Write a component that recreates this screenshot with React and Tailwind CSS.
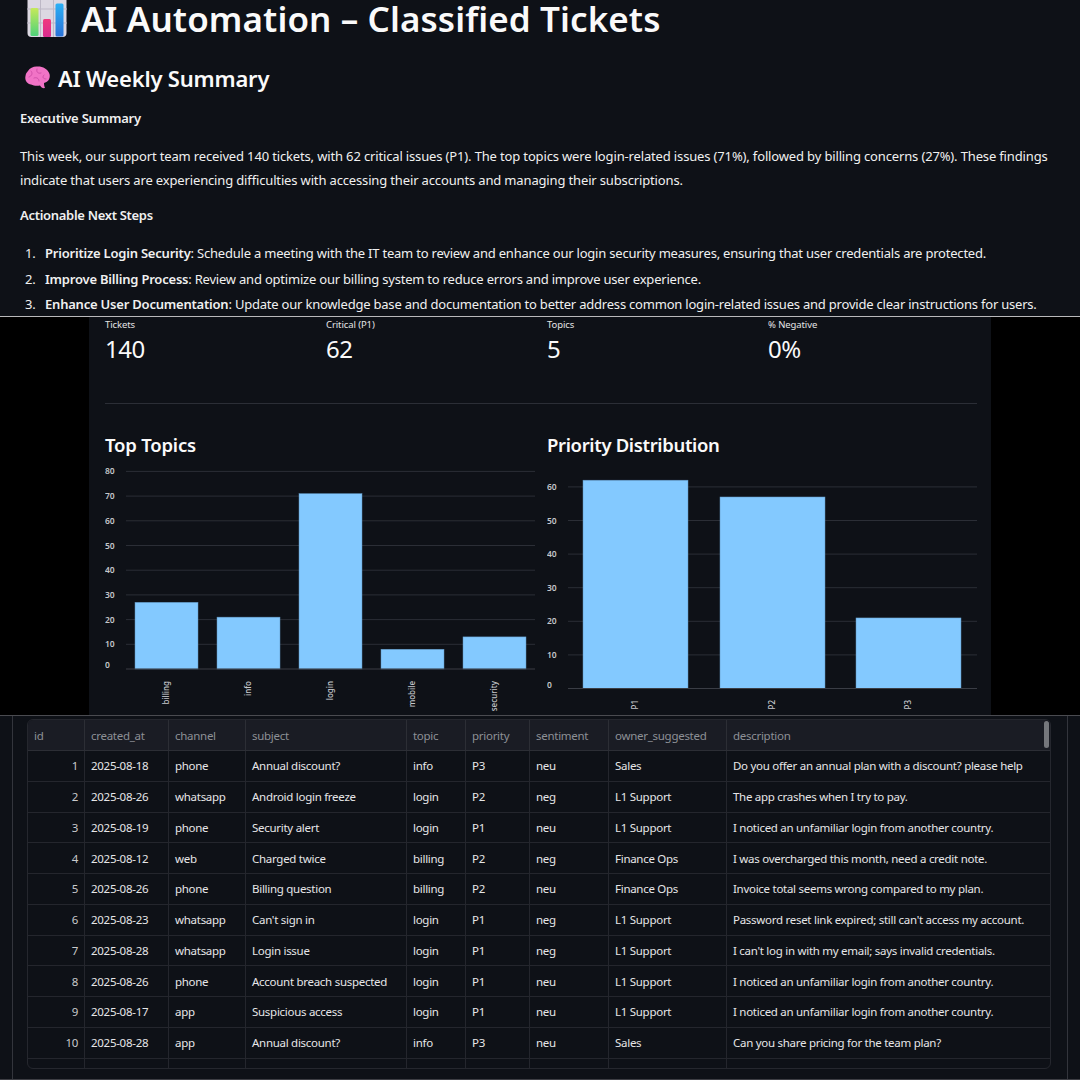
const rows = [
  [1, "2025-08-18", "phone", "Annual discount?", "info", "P3", "neu", "Sales", "Do you offer an annual plan with a discount? please help"],
  [2, "2025-08-26", "whatsapp", "Android login freeze", "login", "P2", "neg", "L1 Support", "The app crashes when I try to pay."],
  [3, "2025-08-19", "phone", "Security alert", "login", "P1", "neu", "L1 Support", "I noticed an unfamiliar login from another country."],
  [4, "2025-08-12", "web", "Charged twice", "billing", "P2", "neg", "Finance Ops", "I was overcharged this month, need a credit note."],
  [5, "2025-08-26", "phone", "Billing question", "billing", "P2", "neu", "Finance Ops", "Invoice total seems wrong compared to my plan."],
  [6, "2025-08-23", "whatsapp", "Can't sign in", "login", "P1", "neg", "L1 Support", "Password reset link expired; still can't access my account."],
  [7, "2025-08-28", "whatsapp", "Login issue", "login", "P1", "neg", "L1 Support", "I can't log in with my email; says invalid credentials."],
  [8, "2025-08-26", "phone", "Account breach suspected", "login", "P1", "neu", "L1 Support", "I noticed an unfamiliar login from another country."],
  [9, "2025-08-17", "app", "Suspicious access", "login", "P1", "neu", "L1 Support", "I noticed an unfamiliar login from another country."],
  [10, "2025-08-28", "app", "Annual discount?", "info", "P3", "neu", "Sales", "Can you share pricing for the team plan?"],
];

const columns = ["id", "created_at", "channel", "subject", "topic", "priority", "sentiment", "owner_suggested", "description"];
const gridCols = "grid grid-cols-[57px_84px_77px_161px_59px_64px_79px_118px_1fr]";

const metrics = [
  ["Tickets", "140"],
  ["Critical (P1)", "62"],
  ["Topics", "5"],
  ["% Negative", "0%"],
];

function ChartEmoji() {
  return (
    <svg width="40" height="38" viewBox="0 0 40 38" className="shrink-0">
      <defs>
        <linearGradient id="g1" x1="0" y1="0" x2="0" y2="1"><stop offset="0" stopColor="#c6e95a" /><stop offset="1" stopColor="#4fd27a" /></linearGradient>
        <linearGradient id="g2" x1="0" y1="0" x2="0" y2="1"><stop offset="0" stopColor="#f0397f" /><stop offset="1" stopColor="#d92c8e" /></linearGradient>
        <linearGradient id="g3" x1="0" y1="0" x2="0" y2="1"><stop offset="0" stopColor="#2bb0f5" /><stop offset="1" stopColor="#2a72d8" /></linearGradient>
      </defs>
      <rect x="0.5" y="-6" width="39" height="43" rx="4" fill="#dcd8e2" />
      <path d="M13.5 -6V37M26.5 -6V37M0 9H40M0 23H40" stroke="#bdb8c6" strokeWidth="1" />
      <rect x="3.5" y="8" width="8" height="28" rx="1.5" fill="url(#g1)" />
      <rect x="16" y="19" width="8" height="18" rx="1.5" fill="url(#g2)" />
      <rect x="28.5" y="3.5" width="8" height="33" rx="1.5" fill="url(#g3)" />
    </svg>
  );
}

function BrainEmoji() {
  return (
    <svg width="25" height="24" viewBox="0 0 25 24" className="shrink-0">
      <path d="M3 5C5 1.5 9 0 13 0.5C18 0.5 23 3 24.5 8C25.5 12 23.5 16 19 17C19 19 19.5 21 20 22C18 22.5 16 21.5 15 19.5C12 20 9 20 6 18.5C2 18 -0.5 14 0.5 10C0.8 8 1.5 6.5 3 5Z" fill="#f173c6" />
      <path d="M6 5C8 7 7 10 4 11M12 3C11 6 13 8 16 7M9 12C11 11 14 12 14 15M19 9C17 11 18 13 21 13" fill="none" stroke="#d04fa9" strokeWidth="1" strokeLinecap="round" />
    </svg>
  );
}

function BarChart({ ticks, yZero, step, bars, gridLeft, labelTop }) {
  return (
    <svg width="430" height="254" viewBox="0 0 430 254" className="block font-['Noto_Sans',sans-serif]">
      {ticks.map((t) => {
        const y = yZero - (t / 10) * step;
        return (
          <g key={t}>
            {t > 0 && <line x1={gridLeft} x2="430" y1={y} y2={y} stroke="#2b2e36" strokeWidth="1" />}
            <text x="0" y={y + (t === 0 ? -1 : 3)} fontSize="8.5" fontWeight="600" fill="#c4c6ca">{t}</text>
          </g>
        );
      })}
      {bars.map((b) => (
        <rect key={b.name} x={b.x} y={yZero - (b.value / 10) * step} width={b.w} height={(b.value / 10) * step} fill="#83c9ff" stroke="#5f93bd" strokeWidth="0.5" />
      ))}
      <line x1={gridLeft} x2="430" y1={yZero} y2={yZero} stroke="#3a3d45" strokeWidth="1" />
      {bars.map((b) => (
        <text key={b.name} transform={`translate(${b.x + b.w / 2 + 2} ${labelTop}) rotate(-90)`} textAnchor="end" fontSize="8" fontWeight="500" fill="#c4c6ca">{b.name}</text>
      ))}
    </svg>
  );
}

export default function App() {
  const topicBars = [
    { name: "billing", value: 27, x: 30, w: 63 },
    { name: "info", value: 21, x: 112, w: 63 },
    { name: "login", value: 71, x: 194, w: 63 },
    { name: "mobile", value: 8, x: 276, w: 63 },
    { name: "security", value: 13, x: 358, w: 63 },
  ];
  const priorityBars = [
    { name: "P1", value: 62, x: 36, w: 105 },
    { name: "P2", value: 57, x: 173, w: 105 },
    { name: "P3", value: 21, x: 309, w: 105 },
  ];

  return (
    <div className="w-[1080px] h-[1080px] overflow-hidden bg-[#0e1117] text-[#fafafa] font-['Noto_Sans',sans-serif]">
      {/* summary */}
      <section className="h-[317px] overflow-hidden border-b border-[#b9b9bb] pl-5">
        <div className="flex items-center h-[37px] gap-[14px] pl-[7px]">
          <ChartEmoji />
          <h1 className="text-[35px] font-semibold leading-[37px] tracking-[0.09px] whitespace-nowrap">AI Automation – Classified Tickets</h1>
        </div>
        <div className="flex items-center h-[24px] gap-[8px] pl-[5px] mt-[29px]">
          <BrainEmoji />
          <h2 className="text-[22px] font-semibold leading-[24px] tracking-[-0.2px] whitespace-nowrap">AI Weekly Summary</h2>
        </div>
        <div className="text-[13px] leading-[24px] tracking-[-0.21px] text-[#f0f0f0] whitespace-nowrap">
          <p className="mt-[16px] font-semibold">Executive Summary</p>
          <p className="mt-[14px] tracking-[-0.15px]">
            This week, our support team received 140 tickets, with 62 critical issues (P1). The top topics were login-related issues (71%), followed by billing concerns (27%). These findings
            <br />
            indicate that users are experiencing difficulties with accessing their accounts and managing their subscriptions.
          </p>
          <p className="mt-[11px] font-semibold tracking-[-0.3px]">Actionable Next Steps</p>
          <ol className="mt-[14px] flex flex-col gap-[1.5px]">
            <li className="flex"><span className="w-[25px] pl-[5px]">1.</span><span><strong className="font-semibold">Prioritize Login Security</strong>: Schedule a meeting with the IT team to review and enhance our login security measures, ensuring that user credentials are protected.</span></li>
            <li className="flex"><span className="w-[25px] pl-[5px]">2.</span><span><strong className="font-semibold">Improve Billing Process</strong>: Review and optimize our billing system to reduce errors and improve user experience.</span></li>
            <li className="flex"><span className="w-[25px] pl-[5px]">3.</span><span><strong className="font-semibold">Enhance User Documentation</strong>: Update our knowledge base and documentation to better address common login-related issues and provide clear instructions for users.</span></li>
          </ol>
        </div>
      </section>

      {/* dashboard */}
      <section className="h-[399px] overflow-hidden bg-black border-b border-[#4a4b50]">
        <div className="w-[902px] h-full ml-[89px] bg-[#0e1117] pl-4 pr-[14px]">
          <div className="grid grid-cols-[221px_221px_221px_209px] h-[86px] pt-[1px]">
            {metrics.map(([label, value]) => (
              <div key={label}>
                <div className="text-[9.5px] leading-[14px] text-[#e4e4e6] tracking-[-0.1px]">{label}</div>
                <div className="text-[24px] leading-[36px] -mt-[1px] tracking-[-0.5px]">{value}</div>
              </div>
            ))}
          </div>
          <div className="h-px bg-[#2b2e36]" />
          <div className="grid grid-cols-[430px_430px] gap-x-3 mt-[29px]">
            <div>
              <h3 className="text-[18.5px] font-semibold h-[25px] leading-[24px] tracking-[-0.2px]">Top Topics</h3>
              <BarChart ticks={[0, 10, 20, 30, 40, 50, 60, 70, 80]} yZero={211} step={24.7} bars={topicBars} gridLeft={21} labelTop={223} />
            </div>
            <div>
              <h3 className="text-[18.5px] font-semibold h-[25px] leading-[24px] tracking-[-0.35px]">Priority Distribution</h3>
              <BarChart ticks={[0, 10, 20, 30, 40, 50, 60]} yZero={230.5} step={33.6} bars={priorityBars} gridLeft={21} labelTop={242} />
            </div>
          </div>
        </div>
      </section>

      {/* tickets table */}
      <section className="h-[364px] overflow-hidden border-b border-[#3d3e44]">
        <div className="mx-[12px] h-full border-x border-[#33353c] px-[14px] pt-[3px]">
          <div className="relative h-[350px] w-[1024px] overflow-hidden rounded-[6px] border border-[#25272e] text-[11.5px] tracking-[-0.28px] text-[#e6e6e8]">
            <div className={`${gridCols} h-[31px] bg-[#1a1c24] text-[#8d9096] border-b border-[#2c2e35]`}>
              {columns.map((c) => (
                <div key={c} className="flex items-center px-[6px] pt-[1px] border-r border-[#2c2e35] last:border-r-0">{c}</div>
              ))}
            </div>
            {rows.map((row) => (
              <div key={row[0]} className={`${gridCols} h-[30.75px] border-b border-[#24262d]`}>
                {row.map((cell, i) => (
                  <div key={i} className={`flex items-center px-[6px] whitespace-nowrap border-r border-[#24262d] last:border-r-0 ${i === 0 ? "justify-end text-[#c9cacc]" : ""}`}>{cell}</div>
                ))}
              </div>
            ))}
            <div className={`${gridCols} h-[10px]`}>
              {columns.map((c) => (
                <div key={c} className="border-r border-[#24262d] last:border-r-0" />
              ))}
            </div>
            <div className="absolute right-[1px] top-[1px] w-[5px] h-[27px] rounded-full bg-[#75777c]" />
          </div>
        </div>
      </section>
    </div>
  );
}
